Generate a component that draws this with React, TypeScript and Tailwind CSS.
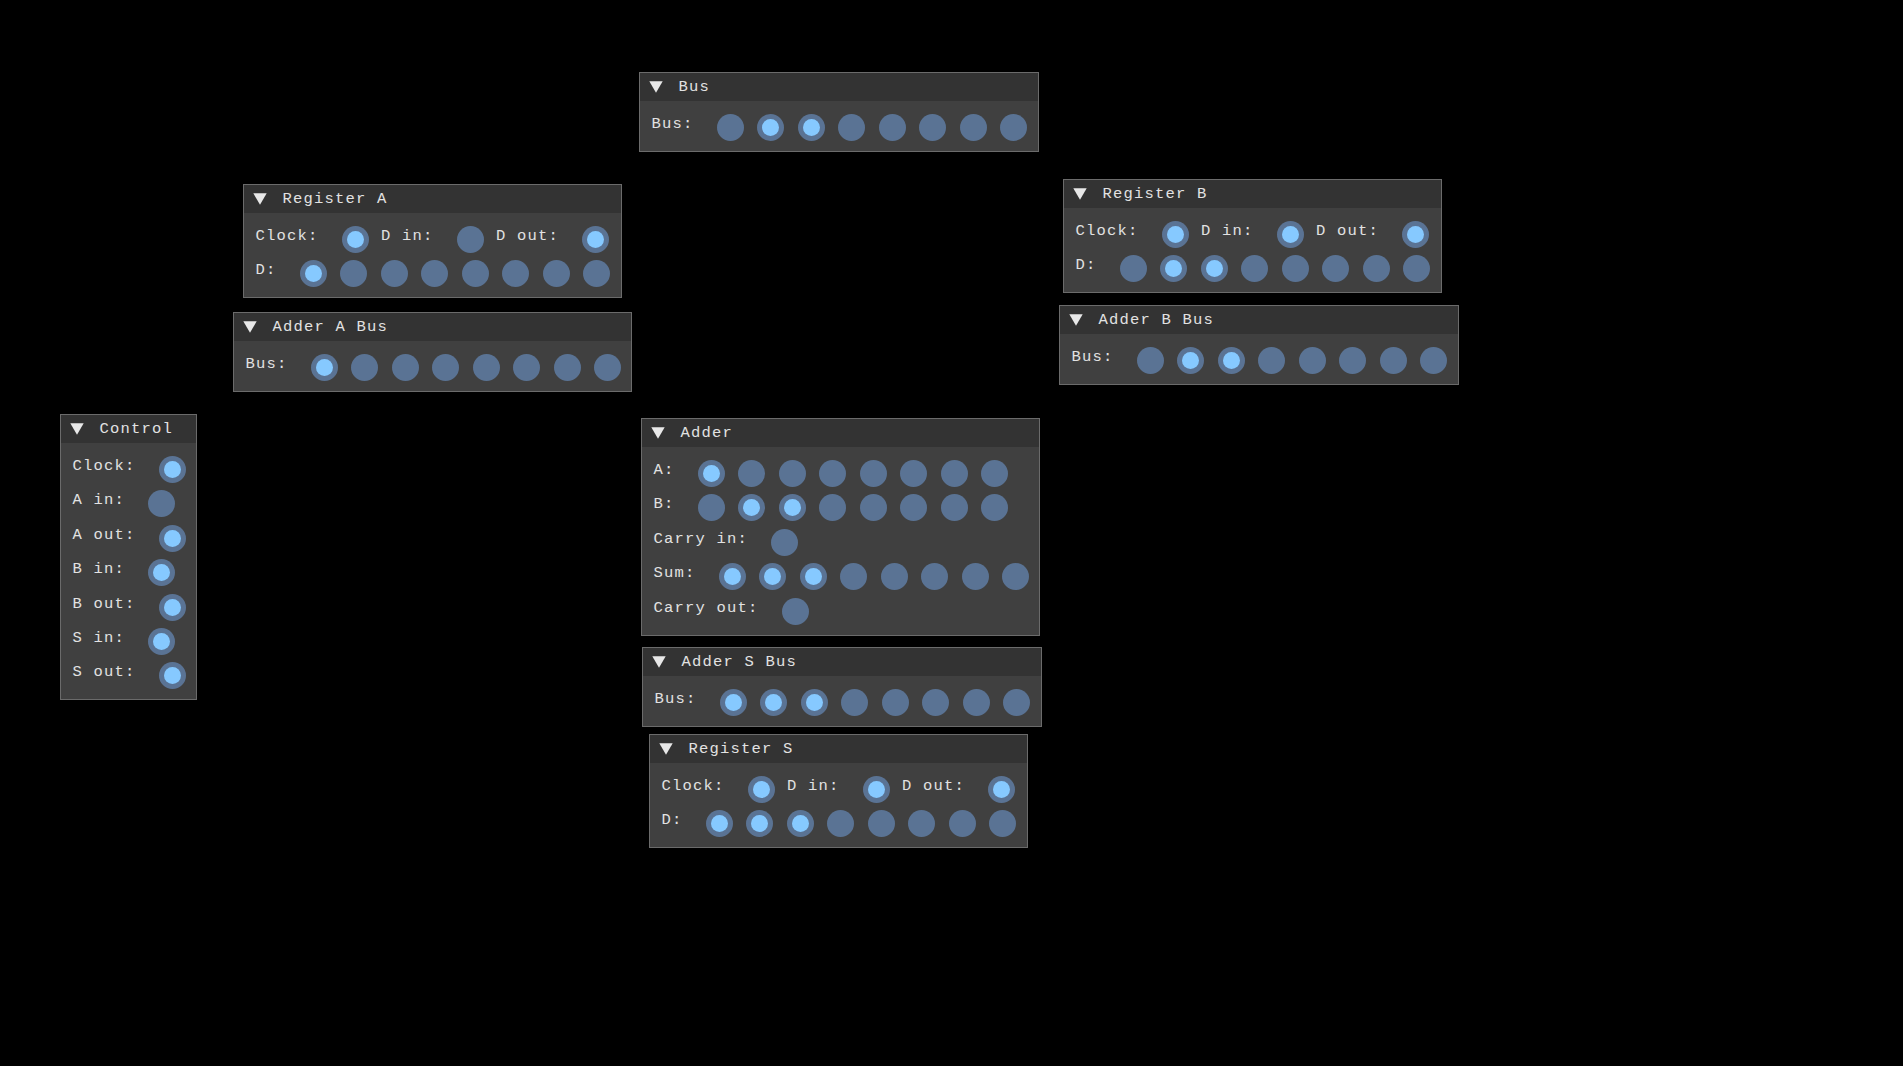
import React from "react";

type Item =
  | { kind: "label"; text: string; first?: boolean }
  | { kind: "dots"; bits: number[] };

type Row = Item[];

type Win = {
  title: string;
  x: number;
  y: number;
  w: number;
  rows: Row[];
};

const bits = (s: string) => s.split("").map((c) => (c === "1" ? 1 : 0));

const busRow = (s: string): Row => [
  { kind: "label", text: "Bus:", first: true },
  { kind: "dots", bits: bits(s) },
];

const regRows = (clk: number, din: number, dout: number, d: string): Row[] => [
  [
    { kind: "label", text: "Clock:", first: true },
    { kind: "dots", bits: [clk] },
    { kind: "label", text: "D in:" },
    { kind: "dots", bits: [din] },
    { kind: "label", text: "D out:" },
    { kind: "dots", bits: [dout] },
  ],
  [
    { kind: "label", text: "D:", first: true },
    { kind: "dots", bits: bits(d) },
  ],
];

const single = (label: string, on: number): Row => [
  { kind: "label", text: label, first: true },
  { kind: "dots", bits: [on] },
];

const windows: Win[] = [
  { title: "Bus", x: 639, y: 72, w: 400, rows: [busRow("01100000")] },
  { title: "Register A", x: 243, y: 184, w: 379, rows: regRows(1, 0, 1, "10000000") },
  { title: "Adder A Bus", x: 233, y: 312, w: 399, rows: [busRow("10000000")] },
  { title: "Register B", x: 1063, y: 179, w: 379, rows: regRows(1, 1, 1, "01100000") },
  { title: "Adder B Bus", x: 1059, y: 305, w: 400, rows: [busRow("01100000")] },
  {
    title: "Control",
    x: 60,
    y: 414,
    w: 137,
    rows: [
      single("Clock:", 1),
      single("A in:", 0),
      single("A out:", 1),
      single("B in:", 1),
      single("B out:", 1),
      single("S in:", 1),
      single("S out:", 1),
    ],
  },
  {
    title: "Adder",
    x: 641,
    y: 418,
    w: 399,
    rows: [
      [
        { kind: "label", text: "A:", first: true },
        { kind: "dots", bits: bits("10000000") },
      ],
      [
        { kind: "label", text: "B:", first: true },
        { kind: "dots", bits: bits("01100000") },
      ],
      single("Carry in:", 0),
      [
        { kind: "label", text: "Sum:", first: true },
        { kind: "dots", bits: bits("11100000") },
      ],
      single("Carry out:", 0),
    ],
  },
  { title: "Adder S Bus", x: 642, y: 647, w: 400, rows: [busRow("11100000")] },
  { title: "Register S", x: 649, y: 734, w: 379, rows: regRows(1, 1, 1, "11100000") },
];

function Dot({ on }: { on: number }) {
  return (
    <div className="w-[27px] h-[27px] shrink-0 rounded-full bg-[#5a7394] flex items-center justify-center">
      {on ? <div className="w-[17px] h-[17px] rounded-full bg-[#86c9ff]" /> : null}
    </div>
  );
}

function Triangle() {
  return (
    <svg width="14" height="12" viewBox="0 0 14 12" className="shrink-0">
      <polygon points="0.3,0.3 13.7,0.3 7,11.7" fill="#e8e8e8" />
    </svg>
  );
}

function Window({ win }: { win: Win }) {
  return (
    <div
      className="absolute border border-[#6b6b6b] bg-[#404040]"
      style={{ left: win.x, top: win.y, width: win.w }}
    >
      <div className="h-[28px] bg-[#333333] flex items-center pl-[9px]">
        <Triangle />
        <span className="ml-[15.5px] leading-[21px] pt-[1px]">{win.title}</span>
      </div>
      <div className="px-[11.5px] pt-[13px] pb-[10px] flex flex-col gap-[7.4px]">
        {win.rows.map((row, ri) => (
          <div key={ri} className="flex items-start h-[27px]">
            {row.map((it, ii) =>
              it.kind === "label" ? (
                <span
                  key={ii}
                  className={
                    it.first
                      ? "leading-[21px] whitespace-pre mr-[23px]"
                      : "leading-[21px] whitespace-pre mr-[23px] ml-[12.5px]"
                  }
                >
                  {it.text}
                </span>
              ) : (
                <div key={ii} className="flex gap-[13.5px]">
                  {it.bits.map((b, bi) => (
                    <Dot key={bi} on={b} />
                  ))}
                </div>
              )
            )}
          </div>
        ))}
      </div>
    </div>
  );
}

export default function App() {
  return (
    <div className="relative w-[1903px] h-[1066px] bg-black overflow-hidden font-['Liberation_Mono',monospace] text-[15.5px] tracking-[1.2px] text-[#e2e2e2]">
      {windows.map((w) => (
        <Window key={w.title} win={w} />
      ))}
    </div>
  );
}
